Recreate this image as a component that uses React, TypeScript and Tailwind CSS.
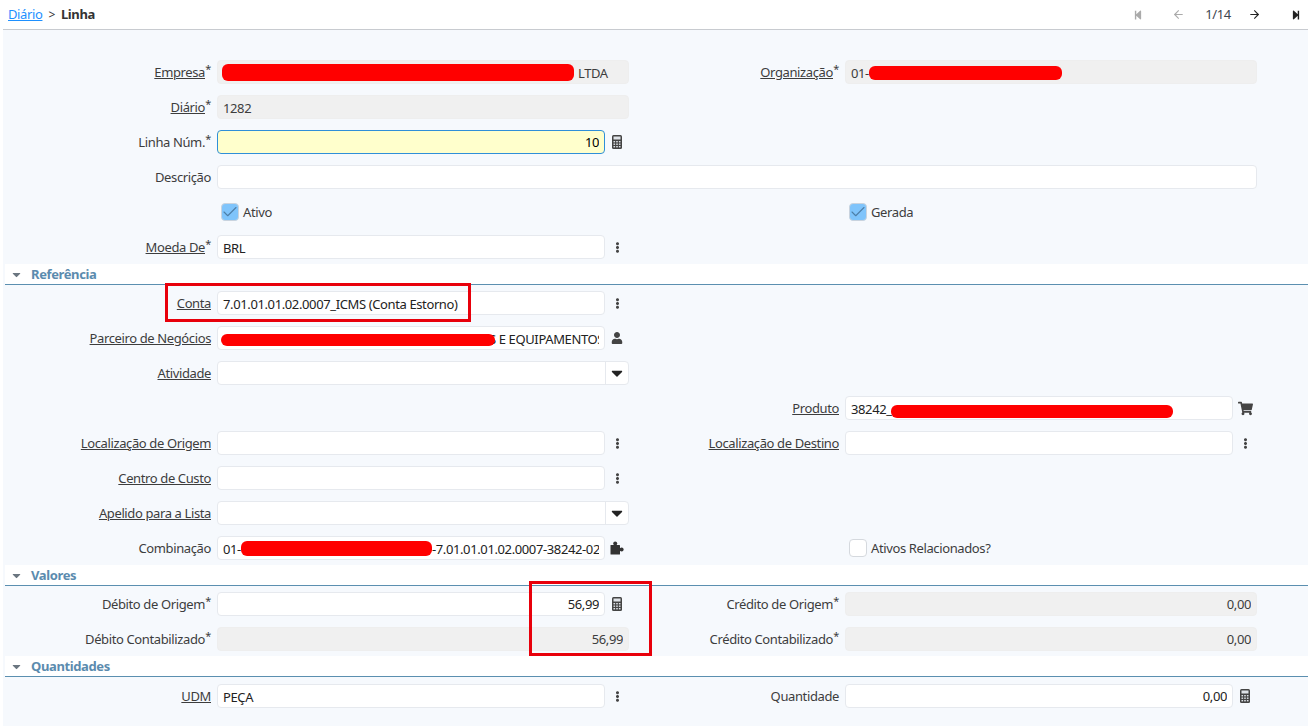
import { ReactNode } from "react";
import { FaCaretDown, FaEllipsisV, FaShoppingCart, FaUser, FaStepBackward, FaStepForward } from "react-icons/fa";
import { ArrowLeft, ArrowRight, Check } from "lucide-react";

function Calc() {
  return (
    <svg width="10" height="14" viewBox="0 0 10 14" className="text-[#444]">
      <rect width="10" height="14" rx="1.5" fill="currentColor" />
      <rect x="1.5" y="1.5" width="7" height="3" fill="#dfe3e8" />
      <g fill="#dfe3e8">
        <rect x="1.5" y="6" width="1.6" height="1.4" />
        <rect x="4.2" y="6" width="1.6" height="1.4" />
        <rect x="6.9" y="6" width="1.6" height="1.4" />
        <rect x="1.5" y="8.5" width="1.6" height="1.4" />
        <rect x="4.2" y="8.5" width="1.6" height="1.4" />
        <rect x="6.9" y="8.5" width="1.6" height="1.4" />
        <rect x="1.5" y="11" width="1.6" height="1.4" />
        <rect x="4.2" y="11" width="1.6" height="1.4" />
        <rect x="6.9" y="11" width="1.6" height="1.4" />
      </g>
    </svg>
  );
}

function Puzzle() {
  return (
    <svg width="14" height="14" viewBox="0 0 14 14" className="text-[#333]">
      <g fill="currentColor">
        <rect x="0.5" y="4" width="9.5" height="9.5" rx="0.5" />
        <circle cx="5.2" cy="2.6" r="2" />
        <circle cx="11.6" cy="8.6" r="2" />
      </g>
    </svg>
  );
}

function Label({ text, link, req }: { text: string; link?: boolean; req?: boolean }) {
  return (
    <div className="w-full flex justify-end pr-[6px] text-[13px] leading-6 text-[#3d3d3d]">
      <span className={link ? "underline" : ""}>{text}</span>
      {req ? <span className="text-[11px] leading-[17px] w-[6px] text-right">*</span> : null}
    </div>
  );
}

function Field({ children, right, gray, icon, yellow }: { children?: ReactNode; right?: boolean; gray?: boolean; icon?: ReactNode; yellow?: boolean }) {
  const bg = yellow ? "bg-[#ffffcc] border-[#2f8fd8]" : gray ? "bg-[#f0f0f0] border-[#eeeeee] text-[#3d3d3d]" : "bg-white border-[#e6e9ee] text-[#222]";
  return (
    <div className="flex items-center">
      <div className={`h-6 rounded-[4px] border px-[5px] text-[13px] flex-1 min-w-0 ${bg} ${right ? "text-right leading-[22px]" : "leading-[24px]"}`}>
        <div className="h-[22px] overflow-hidden whitespace-nowrap">{children}</div>
      </div>
      {icon ? <div className="w-6 flex justify-center text-[#444] text-[13px]">{icon}</div> : null}
    </div>
  );
}

function Select() {
  return (
    <div className="h-6 flex rounded-[4px] border border-[#e6e9ee] bg-white">
      <div className="flex-1" />
      <div className="w-[23px] border-l border-[#e6e9ee] flex items-center justify-center text-[#222] text-[18px]">
        <FaCaretDown />
      </div>
    </div>
  );
}

function Checkbox({ text, on }: { text: string; on?: boolean }) {
  return (
    <div className="flex items-center h-6 pl-[4px] text-[13px] text-[#3d3d3d]">
      <div className={`w-[18px] h-[18px] rounded-[4px] border flex items-center justify-center ${on ? "bg-[#7fc4fb] border-[#c9d3de]" : "bg-white border-[#d5d9de]"}`}>
        {on ? <Check size={18} strokeWidth={1.5} className="text-[#4d7fa8] shrink-0" /> : null}
      </div>
      <span className="ml-[4px] pt-[1px]">{text}</span>
    </div>
  );
}

function Row({ children }: { children: ReactNode }) {
  return <div className="grid grid-cols-[214px_412px_216px_412px] h-6">{children}</div>;
}

function Section({ title }: { title: string }) {
  return (
    <div className="ml-[2px] h-[21px] bg-white border-b border-[#5b8fb0] flex items-center">
      <FaCaretDown className="ml-[5px] text-[#6b7680] text-[13px]" />
      <span className="ml-[8px] pt-[1px] text-[13px] font-bold text-[#5b8bae]">{title}</span>
    </div>
  );
}

const Redact = ({ className }: { className: string }) => (
  <div className={`absolute bg-[#ff0000] rounded-[6px] ${className}`} />
);

const dots = <FaEllipsisV className="text-[11px]" />;
const calc = <Calc />;

export default function App() {
  return (
    <div className="relative w-[1308px] h-[726px] bg-white overflow-hidden tracking-[-0.38px]" style={{ fontFamily: '"Noto Sans", sans-serif' }}>
      {/* top bar */}
      <div className="ml-[3px] h-[30px] border-b border-[#c8cbd0] flex items-center text-[13px] text-[#333]">
        <span className="ml-[5px] text-[#1e90ff] underline">Diário</span>
        <span className="ml-[6px] text-[12px]">&gt;</span>
        <span className="ml-[6px] font-bold">Linha</span>
        <div className="ml-auto flex items-center">
          <FaStepBackward className="text-[10px] text-[#aaa] mr-[29px]" />
          <ArrowLeft size={13} className="text-[#aaa] mr-[15px]" />
          <span className="w-[36px] text-center text-[#3d4650]">1/14</span>
          <ArrowRight size={13} className="text-[#222] ml-[12px]" />
          <FaStepForward className="text-[10px] text-[#222] ml-[30px] mr-[7px]" />
        </div>
      </div>

      <div className="ml-[3px] h-[696px] bg-[#f6f9fd]">
        <div className="pt-[30px] flex flex-col gap-[11px]">
          <Row>
            <Label text="Empresa" link req />
            <Field gray><span className="pl-[355px]">LTDA</span></Field>
            <Label text="Organização" link req />
            <Field gray>01-</Field>
          </Row>
          <Row>
            <Label text="Diário" link req />
            <Field gray>1282</Field>
          </Row>
          <Row>
            <Label text="Linha Núm." req />
            <Field right yellow icon={calc}>10</Field>
          </Row>
          <div className="grid grid-cols-[214px_1040px] h-6">
            <Label text="Descrição" />
            <Field />
          </div>
          <Row>
            <div />
            <Checkbox text="Ativo" on />
            <div />
            <Checkbox text="Gerada" on />
          </Row>
          <Row>
            <Label text="Moeda De" link req />
            <Field icon={dots}>BRL</Field>
          </Row>
        </div>

        <div className="mt-[5px]"><Section title="Referência" /></div>
        <div className="pt-[6px] flex flex-col gap-[11px]">
          <Row>
            <Label text="Conta" link />
            <Field icon={dots}>7.01.01.01.02.0007_ICMS (Conta Estorno)</Field>
          </Row>
          <Row>
            <Label text="Parceiro de Negócios" link />
            <Field icon={<FaUser className="text-[12px]" />}><span className="pl-[266px]">S E EQUIPAMENTOS</span></Field>
          </Row>
          <Row>
            <Label text="Atividade" link />
            <Select />
          </Row>
          <Row>
            <div />
            <div />
            <Label text="Produto" link />
            <Field icon={<FaShoppingCart className="text-[15px]" />}>38242_</Field>
          </Row>
          <Row>
            <Label text="Localização de Origem" link />
            <Field icon={dots} />
            <Label text="Localização de Destino" link />
            <Field icon={dots} />
          </Row>
          <Row>
            <Label text="Centro de Custo" link />
            <Field icon={dots} />
          </Row>
          <Row>
            <Label text="Apelido para a Lista" link />
            <Select />
          </Row>
          <Row>
            <Label text="Combinação" />
            <Field icon={<Puzzle />}>01-<span className="pl-[191px]">-7.01.01.01.02.0007-38242-02</span></Field>
            <div />
            <Checkbox text="Ativos Relacionados?" />
          </Row>
        </div>

        <div className="mt-[5px]"><Section title="Valores" /></div>
        <div className="pt-[6px] flex flex-col gap-[11px]">
          <Row>
            <Label text="Débito de Origem" req />
            <Field right icon={calc}>56,99</Field>
            <Label text="Crédito de Origem" req />
            <Field right gray>0,00</Field>
          </Row>
          <Row>
            <Label text="Débito Contabilizado" req />
            <Field right gray>56,99</Field>
            <Label text="Crédito Contabilizado" req />
            <Field right gray>0,00</Field>
          </Row>
        </div>

        <div className="mt-[5px]"><Section title="Quantidades" /></div>
        <div className="pt-[7px]">
          <Row>
            <Label text="UDM" link />
            <Field icon={dots}>PEÇA</Field>
            <Label text="Quantidade" />
            <Field right icon={calc}>0,00</Field>
          </Row>
        </div>
      </div>

      {/* redaction marks and highlight frames painted over the screenshot */}
      <Redact className="left-[222px] top-[64px] w-[352px] h-[17px]" />
      <Redact className="left-[869px] top-[66px] w-[193px] h-[14px]" />
      <Redact className="left-[221px] top-[334px] w-[274px] h-[12px]" />
      <Redact className="left-[891px] top-[405px] w-[282px] h-[13px]" />
      <Redact className="left-[241px] top-[541px] w-[191px] h-[15px]" />
      <div className="absolute left-[165px] top-[283px] w-[306px] h-[39px] border-[3px] border-[#e8000b]" />
      <div className="absolute left-[529px] top-[581px] w-[123px] h-[75px] border-[3px] border-[#e8000b]" />
    </div>
  );
}
